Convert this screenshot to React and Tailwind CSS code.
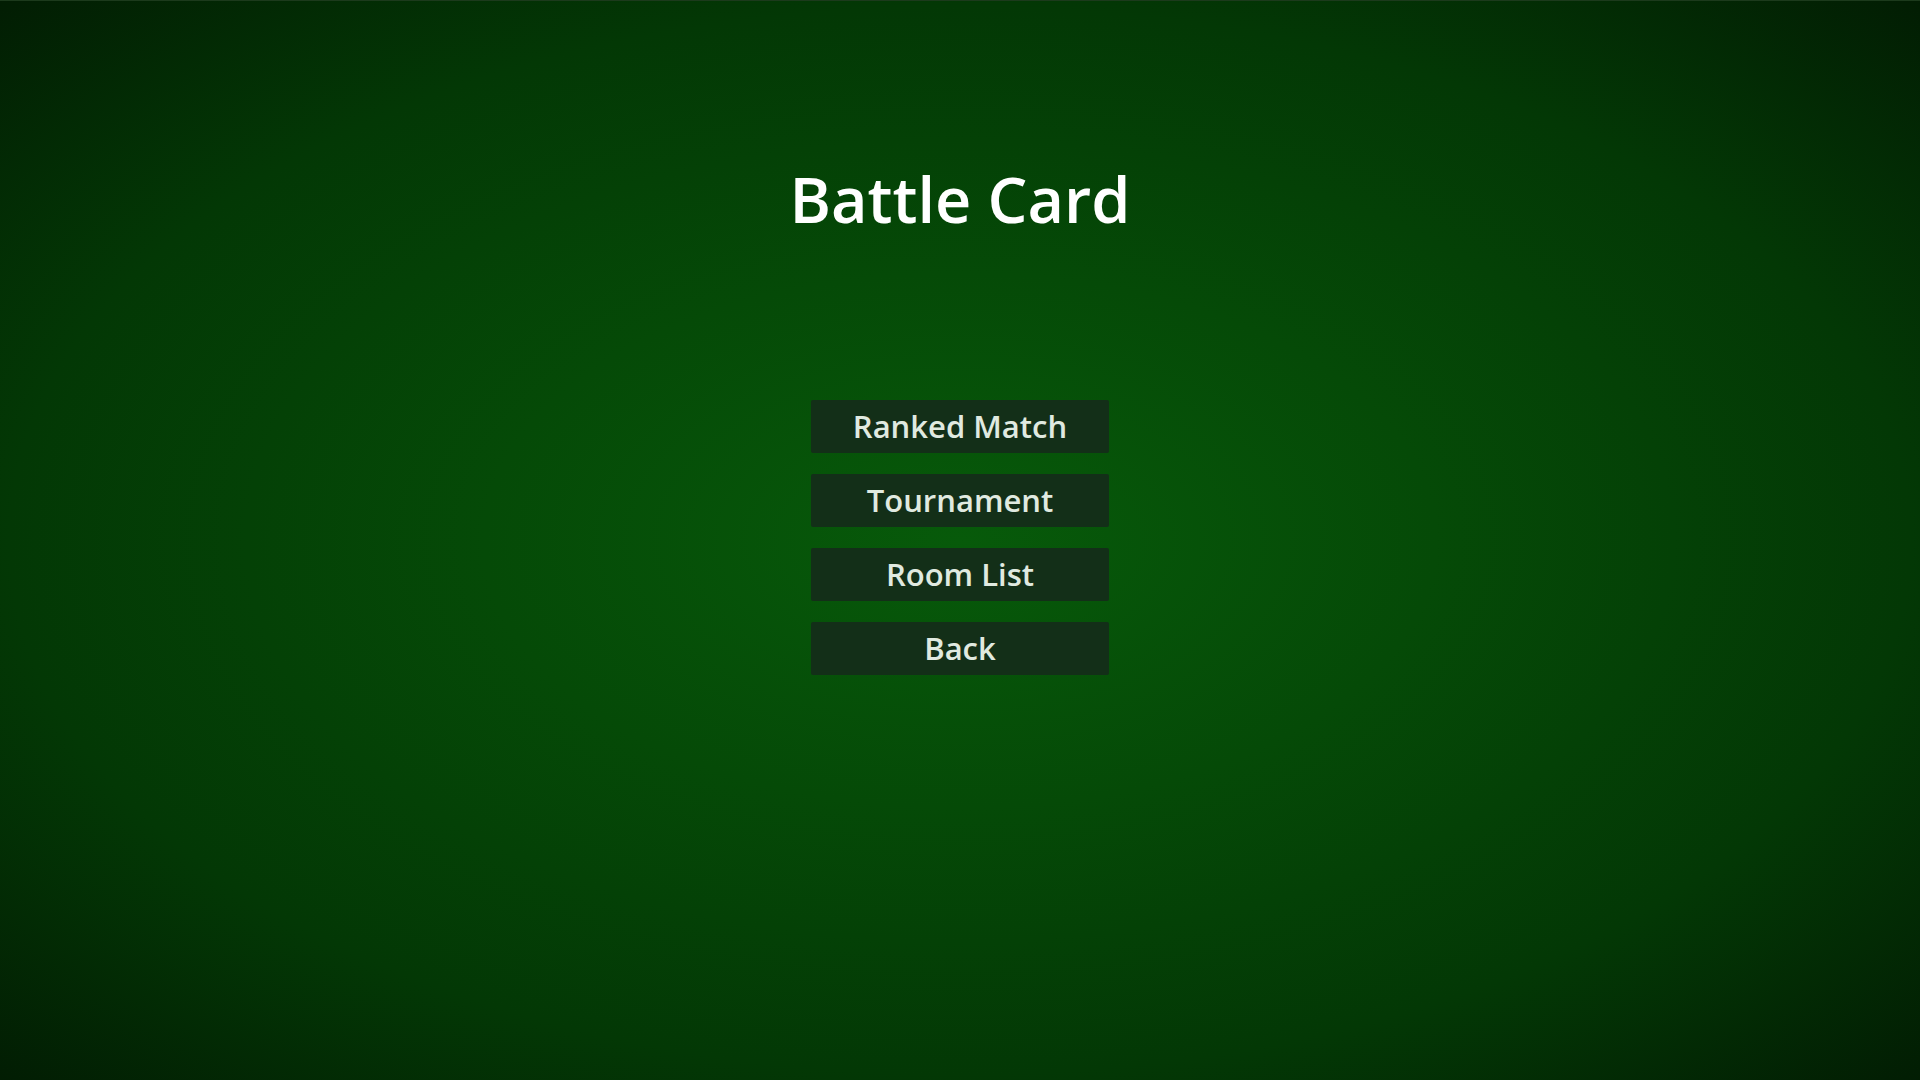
const menuItems = ['Ranked Match', 'Tournament', 'Room List', 'Back'];

const App = () => {
  return (
    <div
      className="w-full h-screen overflow-hidden flex flex-col items-center border-t border-[#1c3a1c] bg-[radial-gradient(ellipse_at_center,#075a0a_0%,#054a07_35%,#033805_70%,#021d03_100%)]"
      style={{ fontFamily: '"Open Sans", "Noto Sans", sans-serif' }}
    >
      <h1 className="pt-[166px] text-[63px] leading-none font-semibold text-white">Battle Card</h1>

      <div className="mt-[170px] flex flex-col gap-[21px]">
        {menuItems.map((item) => (
          <button
            key={item}
            className="w-[298px] h-[53px] flex items-center justify-center rounded-[2px] bg-[#132f18] text-[31px] font-semibold text-[#e0eae0]"
          >
            {item}
          </button>
        ))}
      </div>
    </div>
  );
};

export default App;
